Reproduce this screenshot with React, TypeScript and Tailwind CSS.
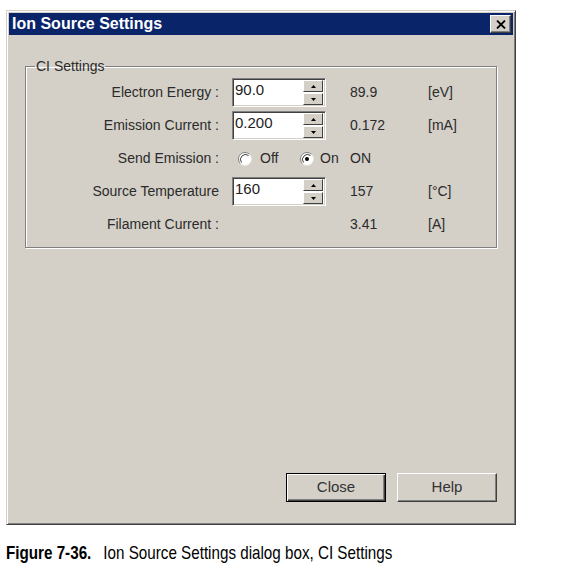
import React from "react";

const SpinArrow = ({ up }: { up?: boolean }) => (
  <svg width="5" height="3" viewBox="0 0 5 3">
    {up ? <path d="M2.5 0 L5 3 L0 3 Z" fill="#000" /> : <path d="M0 0 L5 0 L2.5 3 Z" fill="#000" />}
  </svg>
);

const SpinBox = ({ value }: { value: string }) => (
  <div className="ml-[13px] w-[94px] h-[29px] bg-white border border-t-[#808080] border-l-[#808080] border-b-white border-r-white shadow-[inset_1px_1px_0_#404040,inset_-1px_-1px_0_#d4d0c8] flex">
    <div className="flex-1 pl-[2px] pt-[2px] leading-[18px] text-[15px] text-[#222]">{value}</div>
    <div className="w-[22px] flex flex-col justify-center gap-[1px] pr-[2px]">
      <div className="h-[12px] bg-[#d4d0c8] border border-t-white border-l-white border-b-[#404040] border-r-[#404040] flex items-center justify-center">
        <SpinArrow up />
      </div>
      <div className="h-[12px] bg-[#d4d0c8] border border-t-white border-l-white border-b-[#404040] border-r-[#404040] flex items-center justify-center">
        <SpinArrow />
      </div>
    </div>
  </div>
);

const Radio = ({ checked }: { checked?: boolean }) => (
  <svg width="14" height="14" viewBox="0 0 14 14" className="shrink-0">
    <circle cx="7" cy="7" r="6.5" fill="#fff" />
    <path d="M11.6 2.4 A6.5 6.5 0 0 0 2.4 11.6" fill="none" stroke="#808080" strokeWidth="1" />
    <path d="M10.5 3.5 A5 5 0 0 0 3.5 10.5" fill="none" stroke="#404040" strokeWidth="1" />
    <path d="M2.4 11.6 A6.5 6.5 0 0 0 11.6 2.4" fill="none" stroke="#e8e6e0" strokeWidth="1" />
    {checked && <circle cx="7" cy="7" r="2" fill="#000" />}
  </svg>
);

const Row = ({ children }: { children: React.ReactNode }) => (
  <div className="h-[33px] flex items-center text-[14px] text-[#2b2b2b]">{children}</div>
);

const Label = ({ text }: { text: string }) => (
  <div className="w-[193px] text-right whitespace-pre">{text}</div>
);

const Reading = ({ value, unit }: { value: string; unit?: string }) => (
  <>
    <div className="ml-[24px] w-[78px]">{value}</div>
    <div>{unit}</div>
  </>
);

export default function App() {
  return (
    <div className="w-[563px] h-[570px] bg-white pt-[10px] pl-[6px] font-['Liberation_Sans',Arial,sans-serif]">
      {/* dialog window */}
      <div className="w-[510px] h-[515px] bg-[#d4d0c8] border border-t-[#d4d0c8] border-l-[#d4d0c8] border-b-[#404040] border-r-[#404040] shadow-[inset_1px_1px_0_#fff,inset_-1px_-1px_0_#808080] p-[2px] flex flex-col">
        {/* title bar */}
        <div className="h-[22px] bg-[#0a246a] flex items-center justify-between pl-[3px] pr-[2px]">
          <span className="text-white font-bold text-[16px] leading-none">Ion Source Settings</span>
          <div className="w-[21px] h-[18px] bg-[#d4d0c8] border border-t-white border-l-white border-b-[#404040] border-r-[#404040] shadow-[inset_-1px_-1px_0_#808080] flex items-center justify-center">
            <svg width="10" height="9" viewBox="0 0 10 9">
              <path d="M1 0.5 L9 8.5 M9 0.5 L1 8.5" stroke="#000" strokeWidth="1.8" />
            </svg>
          </div>
        </div>

        <div className="flex-1 px-[16px] pb-[20px] flex flex-col">
          {/* CI settings group */}
          <fieldset className="mt-[23px] border border-[#808080] shadow-[inset_1px_1px_0_#fff,1px_1px_0_#fff] pt-[1px] pb-[6px]">
            <legend className="ml-[9px] px-[1px] text-[14px] leading-[17px] text-[#2b2b2b]">CI Settings</legend>
            <Row>
              <Label text="Electron Energy :" />
              <SpinBox value="90.0" />
              <Reading value="89.9" unit="[eV]" />
            </Row>
            <Row>
              <Label text="Emission Current :" />
              <SpinBox value="0.200" />
              <Reading value="0.172" unit="[mA]" />
            </Row>
            <Row>
              <Label text="Send Emission :" />
              <div className="ml-[13px] w-[94px] flex items-center pl-[6px]">
                <div className="w-[62px] shrink-0 flex items-center gap-[8px]">
                  <Radio />
                  <span>Off</span>
                </div>
                <div className="shrink-0 flex items-center gap-[6px]">
                  <Radio checked />
                  <span>On</span>
                </div>
              </div>
              <Reading value="ON" />
            </Row>
            <Row>
              <Label text="Source Temperature" />
              <SpinBox value="160" />
              <Reading value="157" unit="[°C]" />
            </Row>
            <Row>
              <Label text="Filament Current :" />
              <div className="ml-[13px] w-[94px]" />
              <Reading value="3.41" unit="[A]" />
            </Row>
          </fieldset>

          <div className="flex-1" />

          <div className="flex justify-end gap-[11px] text-[15px] text-[#333]">
            <button className="w-[100px] h-[29px] border border-black bg-[#d4d0c8] shadow-[inset_1px_1px_0_#fff,inset_-1px_-1px_0_#404040,inset_-2px_-2px_0_#808080]">
              Close
            </button>
            <button className="w-[100px] h-[29px] bg-[#d4d0c8] border border-t-white border-l-white border-b-[#404040] border-r-[#404040] shadow-[inset_-1px_-1px_0_#808080]">
              Help
            </button>
          </div>
        </div>
      </div>

      {/* figure caption, condensed face */}
      <div className="mt-[16px] w-max origin-left scale-x-[0.8] whitespace-nowrap text-[19px] leading-[23px] text-black">
        <span className="font-bold">Figure 7-36.</span>
        <span className="ml-[15px]">Ion Source Settings dialog box, CI Settings</span>
      </div>
    </div>
  );
}
